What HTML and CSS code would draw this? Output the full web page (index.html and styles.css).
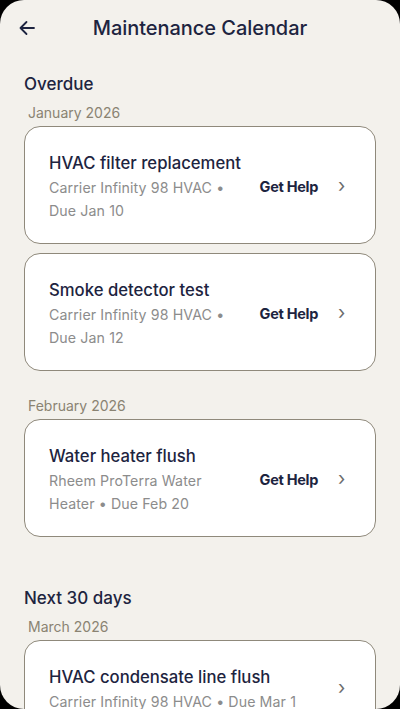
FILE: index.html
```html
<!DOCTYPE html>
<html lang="en">
<head>
  <meta charset="UTF-8" />
  <meta name="viewport" content="width=device-width, initial-scale=1.0"/>
  <title>Maintenance Calendar</title>
  <link rel="stylesheet" href="styles.css">
</head>
<body>
  <div class="screen">
    <header class="topbar">
      <button class="back" aria-label="Back">
        <svg width="18" height="18" viewBox="0 0 18 18" fill="none" stroke="#1d2440" stroke-width="1.8" stroke-linecap="round" stroke-linejoin="round">
          <path d="M16 9H2.5M8.5 3L2.5 9l6 6"/>
        </svg>
      </button>
      <h1>Maintenance Calendar</h1>
    </header>

    <section class="section">
      <h2>Overdue</h2>
      <div class="month">
        <div class="month-label">January 2026</div>
        <div class="cards">
          <div class="card">
            <div class="card-text">
              <div class="card-title">HVAC filter replacement</div>
              <div class="card-sub">Carrier Infinity 98 HVAC • Due Jan 10</div>
            </div>
            <span class="help">Get Help</span>
            <span class="chev">&rsaquo;</span>
          </div>
          <div class="card">
            <div class="card-text">
              <div class="card-title">Smoke detector test</div>
              <div class="card-sub">Carrier Infinity 98 HVAC • Due Jan 12</div>
            </div>
            <span class="help">Get Help</span>
            <span class="chev">&rsaquo;</span>
          </div>
        </div>
      </div>
      <div class="month">
        <div class="month-label">February 2026</div>
        <div class="cards">
          <div class="card">
            <div class="card-text">
              <div class="card-title">Water heater flush</div>
              <div class="card-sub">Rheem ProTerra Water Heater • Due Feb 20</div>
            </div>
            <span class="help">Get Help</span>
            <span class="chev">&rsaquo;</span>
          </div>
        </div>
      </div>
    </section>

    <section class="section">
      <h2>Next 30 days</h2>
      <div class="month">
        <div class="month-label">March 2026</div>
        <div class="cards">
          <div class="card">
            <div class="card-text">
              <div class="card-title">HVAC condensate line flush</div>
              <div class="card-sub">Carrier Infinity 98 HVAC • Due Mar 1</div>
            </div>
            <span class="chev">&rsaquo;</span>
          </div>
        </div>
      </div>
    </section>
  </div>
</body>
</html>
```

FILE: styles.css
```css
* {
  box-sizing: border-box;
}
body {
  margin: 0;
  background: #000;
  font-family: Inter, "Noto Sans", sans-serif;
  color: #1d2440;
}
.screen {
  width: 400px;
  height: 709px;
  background: #f3f1ec;
  border-radius: 24px;
  overflow: hidden;
}
.topbar {
  height: 56px;
  display: flex;
  align-items: center;
  justify-content: center;
  position: relative;
}
.back {
  position: absolute;
  left: 18px;
  top: 19px;
  background: none;
  border: none;
  padding: 0;
  width: 18px;
  height: 18px;
  cursor: pointer;
}
.topbar h1 {
  margin: 0;
  font-size: 20px;
  font-weight: 500;
  letter-spacing: -0.05px;
  line-height: 28px;
}
.section {
  padding: 0 24px;
  margin-top: 16px;
}
.section + .section {
  margin-top: 49px;
}
.section h2 {
  margin: 0 0 7px;
  font-size: 17px;
  font-weight: 500;
  line-height: 24px;
}
.month + .month {
  margin-top: 25px;
}
.month-label {
  font-size: 14px;
  line-height: 20px;
  color: #8a8372;
  padding-left: 4px;
  margin-bottom: 3px;
}
.cards {
  display: flex;
  flex-direction: column;
  gap: 9px;
}
.card {
  display: flex;
  align-items: center;
  background: #fff;
  border: 1px solid #8f897b;
  border-radius: 16px;
  padding: 24px 24px 21px 24px;
}
.card-text {
  flex: 1;
  min-width: 0;
  margin-right: 16px;
}
.card-title {
  font-size: 16.7px;
  font-weight: 500;
  line-height: 24px;
  margin-bottom: 1px;
}
.card-sub {
  font-size: 14.2px;
  letter-spacing: 0.1px;
  line-height: 23px;
  color: #8c8c8c;
}
.help {
  font-size: 14.5px;
  font-weight: 700;
  letter-spacing: -0.3px;
  white-space: nowrap;
  margin-right: 20px;
}
.chev {
  font-size: 19px;
  line-height: 20px;
  color: #6d6d6d;
  width: 10px;
  margin-right: 3px;
  margin-top: -2px;
}
```
